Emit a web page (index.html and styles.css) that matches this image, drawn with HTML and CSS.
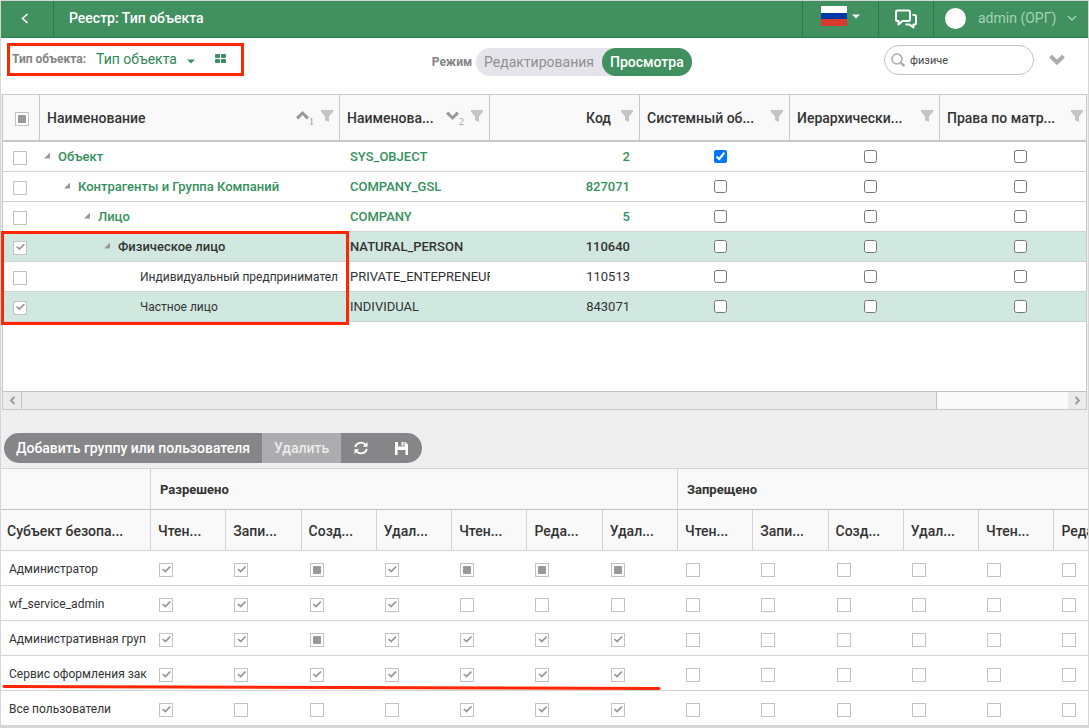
FILE: index.html
```html
<!DOCTYPE html>
<html lang="ru">
    <head>
        <meta charset="UTF-8">
        <meta name="viewport" content="width=device-width, initial-scale=1">
        <title>Реестр: Тип объекта</title>

        <link rel="stylesheet" href="styles.css">
    </head>

    <body>
        <header class="topbar">
            <button class="topbar_back" type="button" aria-label="Назад">
                <svg width="8" height="12" viewBox="0 0 8 12"><path d="M6.5 1 L1.5 5.5 L6.5 10" fill="none" stroke="#fff" stroke-width="1.6"/></svg>
            </button>
            <h1>Реестр: Тип объекта</h1>
            <button class="topbar_lang" type="button" aria-label="Язык">
                <span class="flag"></span>
                <svg width="8" height="5" viewBox="0 0 8 5"><path d="M0 0.5 H8 L4 4.5 Z" fill="#fff"/></svg>
            </button>
            <button class="topbar_chat" type="button" aria-label="Сообщения">
                <svg width="24" height="20" viewBox="0 0 24 20" fill="none" stroke="#fff" stroke-width="2" stroke-linejoin="round">
                    <path d="M4 1.5 H14.5 Q16 1.5 16 3 V10.5 Q16 12 14.5 12 H8.5 L4.5 15.5 V12 H3.5 Q2 12 2 10.5 V3 Q2 1.5 3.5 1.5 Z"/>
                    <path d="M18.5 6 H20.5 Q22 6 22 7.5 V14 Q22 15.5 20.5 15.5 H19.5 V18.5 L15.5 15.5 H11.5"/>
                </svg>
            </button>
            <button class="topbar_user" type="button">
                <span class="avatar"></span>
                <span class="user_name">admin (ОРГ)</span>
                <svg width="10" height="7" viewBox="0 0 10 7"><path d="M1 1 L5 5 L9 1" fill="none" stroke="#a5d3b9" stroke-width="1.4"/></svg>
            </button>
        </header>

        <div class="toolbar">
            <div class="type_filter">
                <label for="object-type">Тип объекта:</label>
                <select id="object-type">
                    <option>Тип объекта</option>
                </select>
                <svg class="caret" width="8" height="5" viewBox="0 0 8 5"><path d="M0 0.5 H8 L4 4.5 Z" fill="#3c8f5e"/></svg>
                <button class="tiles" type="button" aria-label="Плитка">
                    <svg width="11" height="9" viewBox="0 0 11 9" fill="#3c8f5e">
                        <rect x="0" y="0" width="5" height="4" rx="1"/><rect x="6" y="0" width="5" height="4" rx="1"/>
                        <rect x="0" y="5" width="5" height="4" rx="1"/><rect x="6" y="5" width="5" height="4" rx="1"/>
                    </svg>
                </button>
            </div>
            <div class="mode">
                <span class="mode_label">Режим</span>
                <div class="mode_switch">
                    <button type="button">Редактирования</button>
                    <button class="active" type="button">Просмотра</button>
                </div>
            </div>
            <div class="search">
                <div class="search_box">
                    <svg width="15" height="15" viewBox="0 0 15 15" fill="none" stroke="#aaa"><circle cx="6" cy="6" r="5" stroke-width="1.5"/><path d="M9.8 9.8 L13.6 13.2" stroke-width="2.4"/></svg>
                    <input type="text" value="физиче" aria-label="Поиск">
                </div>
                <button class="search_more" type="button" aria-label="Развернуть">
                    <svg width="16" height="12" viewBox="0 0 16 12"><path d="M1.5 2 L8 8.5 L14.5 2" fill="none" stroke="#aeaeae" stroke-width="4"/></svg>
                </button>
            </div>
            <div class="mark mark_filter"></div>
        </div>

        <div class="grid">
            <div class="grid_view">
                <table class="tree">
                    <colgroup>
                        <col class="col_check"><col class="col_name"><col><col><col><col><col>
                    </colgroup>
                    <thead>
                        <tr>
                            <th><input class="box mixed" type="checkbox" aria-label="Выбрать все"></th>
                            <th><div class="head"><span>Наименование</span><i class="sort up"></i><small>1</small><i class="funnel"></i></div></th>
                            <th><div class="head"><span>Наименова...</span><i class="sort down"></i><small>2</small><i class="funnel"></i></div></th>
                            <th><div class="head right"><span>Код</span><i class="funnel"></i></div></th>
                            <th><div class="head"><span>Системный об...</span><i class="funnel"></i></div></th>
                            <th><div class="head"><span>Иерархически...</span><i class="funnel"></i></div></th>
                            <th><div class="head"><span>Права по матр...</span><i class="funnel"></i></div></th>
                        </tr>
                    </thead>
                    <tbody id="tree-rows"></tbody>
                </table>
            </div>
            <div class="scroll">
                <button type="button" aria-label="Влево">
                    <svg width="7" height="9" viewBox="0 0 7 9"><path d="M5.5 1 L2 4.5 L5.5 8" fill="none" stroke="#999" stroke-width="1.8"/></svg>
                </button>
                <div class="scroll_track"><div class="scroll_thumb"></div></div>
                <button type="button" aria-label="Вправо">
                    <svg width="7" height="9" viewBox="0 0 7 9"><path d="M1.5 1 L5 4.5 L1.5 8" fill="none" stroke="#999" stroke-width="1.8"/></svg>
                </button>
            </div>
            <div class="mark mark_tree"></div>
        </div>

        <div class="actions">
            <button type="button">Добавить группу или пользователя</button>
            <button class="disabled" type="button">Удалить</button>
            <button class="icon" type="button" aria-label="Обновить">
                <svg width="16" height="16" viewBox="0 0 16 16" fill="none" stroke="#fff" stroke-width="1.8">
                    <path d="M2.2 7 A5.8 5.2 0 0 1 12.6 4.8"/><path d="M13.8 9 A5.8 5.2 0 0 1 3.4 11.2"/>
                    <path d="M14.5 2 V6.8 H9.8 Z" fill="#fff" stroke="none"/><path d="M1.5 14 V9.2 H6.2 Z" fill="#fff" stroke="none"/>
                </svg>
            </button>
            <button class="icon" type="button" aria-label="Сохранить">
                <svg width="13" height="13" viewBox="0 0 13 13"><path fill="#fff" fill-rule="evenodd" d="M0 0 H3 V4.5 H9.5 V0 H10.5 L13 2.5 V13 H10.5 V8 H2.5 V13 H0 Z M6.5 0 H8.5 V3.5 H6.5 Z"/></svg>
            </button>
        </div>

        <div class="rights_view">
            <table class="rights">
                <colgroup>
                    <col class="col_subject"><col span="14">
                </colgroup>
                <thead>
                    <tr class="groups">
                        <th></th>
                        <th colspan="7">Разрешено</th>
                        <th colspan="7">Запрещено</th>
                    </tr>
                    <tr>
                        <th>Субъект безопа...</th>
                        <th>Чтен...</th><th>Запи...</th><th>Созд...</th><th>Удал...</th><th>Чтен...</th><th>Реда...</th><th>Удал...</th>
                        <th>Чтен...</th><th>Запи...</th><th>Созд...</th><th>Удал...</th><th>Чтен...</th><th>Реда</th><th></th>
                    </tr>
                </thead>
                <tbody id="rights-rows"></tbody>
            </table>
            <svg class="underline" width="660" height="8" viewBox="0 0 660 8"><path d="M3 2.5 L658 4.5" stroke="#ff2600" stroke-width="3" stroke-linecap="round"/></svg>
        </div>

        <script src="app.js"></script>
    </body>
</html>
```

FILE: styles.css
```css
* {
    box-sizing: border-box;
}
body {
    margin: 0;
    min-height: 100vh;
    border: 1px solid #d6d6d6;
    border-bottom-width: 2px;
    overflow-x: hidden;
    font-family: Roboto, 'Noto Sans', sans-serif;
    font-size: 13px;
    color: #333;
    background: #efefef;
}
button {
    display: flex;
    align-items: center;
    margin: 0;
    padding: 0;
    border: 0;
    font: inherit;
    color: inherit;
    background: none;
}
svg {
    flex: none;
}

/* header */
.topbar {
    display: flex;
    height: 37px;
    color: #fff;
    background: #409060;
    border-bottom: 1px solid #2f7a4d;
}
.topbar h1 {
    flex: 1;
    margin: 0;
    padding-left: 15px;
    font-size: 14px;
    font-weight: 500;
    line-height: 34px;
}
.topbar_back {
    justify-content: center;
    width: 53px;
    padding-right: 4px;
    border-right: 1px solid #2f7a4d;
}
.topbar_lang,
.topbar_chat,
.topbar_user {
    border-left: 1px solid #2f7a4d;
}
.topbar_lang {
    width: 76px;
    padding: 0 0 6px 18px;
    gap: 5px;
}
.topbar_chat {
    justify-content: center;
    width: 55px;
}
.topbar_user {
    width: 155px;
    padding: 0 11px 2px 11px;
    font-size: 14px;
    color: #a5d3b9;
}
.flag {
    width: 26px;
    height: 20px;
    background: linear-gradient(#fff 33%, #0039a6 33% 67%, #d83a2b 67%);
}
.avatar {
    width: 21px;
    height: 21px;
    margin-right: 12px;
    border-radius: 50%;
    background: #fff;
}
.user_name {
    flex: 1;
    text-align: left;
}

/* toolbar */
.toolbar {
    position: relative;
    display: grid;
    grid-template-columns: 14fr auto 13fr;
    height: 56px;
    background: #fff;
}
.type_filter {
    display: flex;
    align-items: center;
    height: 42px;
    padding-left: 11px;
}
.type_filter label {
    font-size: 12px;
    font-weight: 700;
    color: #848484;
}
.type_filter select {
    margin-left: 10px;
    padding: 0;
    border: 0;
    appearance: none;
    font: inherit;
    font-size: 14px;
    color: #2f8554;
    background: none;
}
.caret {
    margin: 4px 20px 0 10px;
}
.tiles {
    padding-bottom: 2px;
}
.mode {
    display: flex;
    align-items: center;
    height: 48px;
    gap: 4px;
    padding-left: 4px;
}
.mode_label {
    font-size: 12px;
    font-weight: 700;
    color: #848484;
}
.mode_switch {
    display: flex;
    height: 28px;
    border-radius: 14px;
    background: #e5e4ea;
}
.mode_switch button {
    padding: 0 8px;
    border-radius: 14px;
    font-size: 14px;
    color: #909090;
}
.mode_switch .active {
    font-weight: 500;
    color: #fff;
    background: #409060;
}
.search {
    display: flex;
    justify-content: flex-end;
    align-items: center;
    height: 44px;
    padding-right: 23px;
}
.search_box {
    display: flex;
    align-items: center;
    gap: 4px;
    width: 150px;
    height: 30px;
    padding: 0 8px 0 6px;
    border: 1px solid #c3c3c3;
    border-radius: 15px;
}
.search_box input {
    width: 100%;
    padding: 0;
    border: 0;
    outline: 0;
    font: inherit;
    font-size: 11px;
    color: #444;
}
.search_more {
    margin-left: 15px;
}

/* red marks over the page */
.mark {
    position: absolute;
    border: 3px solid #ff2600;
    pointer-events: none;
}
.mark_filter {
    top: 5px;
    left: 6px;
    width: 237px;
    height: 33px;
}
.mark_tree {
    top: 136px;
    left: -2px;
    width: 348px;
    height: 94px;
}

/* object tree */
.grid {
    position: relative;
    margin: 0 1px;
    border: 1px solid #c8c8c8;
    background: #fff;
}
.grid_view {
    min-height: 296px;
    overflow: hidden;
}
table {
    border-collapse: separate;
    border-spacing: 0;
    table-layout: fixed;
}
th,
td {
    padding: 0;
    overflow: hidden;
    white-space: nowrap;
    text-align: left;
}
.tree {
    width: 1087px;
}
.col_check {
    width: 37px;
}
.col_name {
    width: 300px;
}
.tree th {
    height: 47px;
    font-size: 14px;
    font-weight: 500;
    background: #f9f9f9;
    border-right: 1px solid #c8c8c8;
    border-bottom: 2px solid #c8c8c8;
}
.tree th:first-child {
    padding-left: 12px;
}
.head {
    display: flex;
    align-items: center;
    padding: 0 6px 0 7px;
}
.head span {
    flex: 1;
}
.head.right span {
    text-align: right;
}
.head small {
    align-self: flex-end;
    width: 6px;
    font-family: 'Liberation Serif', serif;
    font-size: 10px;
    font-weight: 400;
    line-height: 8px;
    color: #999;
}
.funnel {
    width: 12px;
    height: 12px;
    margin: 0 0 3px 6px;
    background: #c4c4c4;
    clip-path: polygon(0 0, 100% 0, 100% 15%, 67% 55%, 67% 100%, 33% 85%, 33% 55%, 0 15%);
}
.head.right .funnel {
    margin-left: 10px;
}
.sort {
    width: 13px;
    height: 9px;
    margin-bottom: 4px;
    background: #999;
    clip-path: polygon(50% 0, 100% 70%, 82% 95%, 50% 45%, 18% 95%, 0 70%);
}
.sort.down {
    clip-path: polygon(50% 100%, 100% 30%, 82% 5%, 50% 55%, 18% 5%, 0 30%);
}
.tree td {
    height: 30px;
    padding-left: 10px;
    border-bottom: 1px solid #d3d3d3;
}
.tree td:nth-child(4) {
    padding-right: 10px;
    text-align: right;
}
.tree td:nth-child(n + 5) {
    text-align: center;
}
.tree td input {
    display: inline-block;
    margin: 0 0 2px;
    vertical-align: middle;
}
.folder {
    font-weight: 500;
}
.linked {
    color: #35905d;
}
.selected td {
    background: #d1e8e0;
}
.node {
    display: flex;
    align-items: center;
    margin-left: -10px;
    padding-left: calc(var(--level) * 20px);
    font-size: 12px;
}
.node::before {
    content: '';
    flex: none;
    width: 6px;
    height: 6px;
    margin: 0 10px 2px 4px;
}
.folder .node {
    font-size: 13px;
}
.folder .node::before {
    margin-right: 8px;
    background: #999;
    clip-path: polygon(100% 0, 100% 100%, 0 100%);
}

/* tick box with three states */
.box,
.tree td .box {
    display: block;
    position: relative;
    width: 14px;
    height: 14px;
    margin: 2px 0 0;
    appearance: none;
    border: 1px solid #c3c3c3;
    background: #fff;
}
.box:checked::before {
    content: '';
    position: absolute;
    top: 2px;
    left: 2px;
    width: 9px;
    height: 7px;
    background: #999;
    clip-path: polygon(0 50%, 14% 34%, 36% 62%, 86% 0, 100% 16%, 38% 96%);
}
.box.mixed::before {
    content: '';
    position: absolute;
    top: 2px;
    left: 2px;
    width: 8px;
    height: 8px;
    border-radius: 1px;
    background: #999;
}

/* horizontal scroll bar */
.scroll {
    display: flex;
    height: 18px;
    border-top: 1px solid #c3c3c3;
    background: #ebebeb;
}
.scroll button {
    justify-content: center;
    width: 18px;
}
.scroll_track {
    flex: 1;
    background: #fafafa;
}
.scroll_thumb {
    width: 87.5%;
    height: 100%;
    border: solid #c3c3c3;
    border-width: 0 1px;
    background: #ebebeb;
}

/* actions */
.actions {
    display: flex;
    width: max-content;
    height: 30px;
    margin: 23px 0 5px 3px;
    border-radius: 15px;
    overflow: hidden;
    font-size: 14px;
    font-weight: 500;
    color: #fff;
    background: #868688;
}
.actions button {
    padding: 0 12px;
}
.actions .disabled {
    color: #ececec;
    background: #adadaf;
}
.actions .icon:last-child {
    padding: 0 14px;
}

/* access rights */
.rights_view {
    position: relative;
    overflow: hidden;
    background: #fff;
    border-top: 1px solid #d3d3d3;
}
.rights {
    width: 1204px;
}
.col_subject {
    width: 150px;
}
.rights th {
    height: 41px;
    padding: 2px 0 0 7px;
    font-size: 14px;
    font-weight: 500;
    background: #f9f9f9;
    border-right: 1px solid #d3d3d3;
    border-bottom: 1px solid #d3d3d3;
}
.rights th:first-child {
    padding-left: 6px;
}
.rights .groups th {
    padding-top: 0;
    padding-left: 9px;
    font-size: 13px;
    font-weight: 700;
    border-bottom-color: #c3c3c3;
}
.rights td {
    height: 35px;
    padding: 2px 0 0 8px;
    font-size: 12px;
    border-bottom: 1px solid #d3d3d3;
}
.rights td .box {
    margin-top: 2px;
}
.underline {
    position: absolute;
    top: 215px;
    left: 0;
}
```

FILE: app.js
```js
const tree = [
    { level: 0, name: 'Объект', code: 'SYS_OBJECT', id: 2, cls: 'folder linked', system: true },
    { level: 1, name: 'Контрагенты и Группа Компаний', code: 'COMPANY_GSL', id: 827071, cls: 'folder linked' },
    { level: 2, name: 'Лицо', code: 'COMPANY', id: 5, cls: 'folder linked' },
    { level: 3, name: 'Физическое лицо', code: 'NATURAL_PERSON', id: 110640, cls: 'folder selected', checked: true },
    { level: 4, name: 'Индивидуальный предпринимател', code: 'PRIVATE_ENTEPRENEUR', id: 110513, cls: '' },
    { level: 4, name: 'Частное лицо', code: 'INDIVIDUAL', id: 843071, cls: 'selected', checked: true },
];

// v - разрешено, m - частично, . - пусто
const rights = [
    ['Администратор', 'vvmvmmm.......'],
    ['wf_service_admin', 'vvvv..........'],
    ['Административная груп', 'vvmvvvv.......'],
    ['Сервис оформления зак', 'vvvvvvv.......'],
    ['Все пользователи', 'v...vvv.......'],
];

const check = (label, checked, cls = '') =>
    `<input type="checkbox" class="${cls}" aria-label="${label}"${checked ? ' checked' : ''}>`;

document.querySelector('#tree-rows').innerHTML = tree.map(r => `
    <tr class="${r.cls}">
        <td>${check(r.name, r.checked, 'box')}</td>
        <td><div class="node" style="--level: ${r.level}">${r.name}</div></td>
        <td>${r.code}</td>
        <td>${r.id}</td>
        <td>${check('Системный', r.system)}</td>
        <td>${check('Иерархический', false)}</td>
        <td>${check('Права', false)}</td>
    </tr>`).join('');

document.querySelector('#rights-rows').innerHTML = rights.map(([name, states]) => `
    <tr>
        <td>${name}</td>
        ${Array.from(states).map(s => `<td>${check(name, s === 'v', s === 'm' ? 'box mixed' : 'box')}</td>`).join('')}
    </tr>`).join('');
```
